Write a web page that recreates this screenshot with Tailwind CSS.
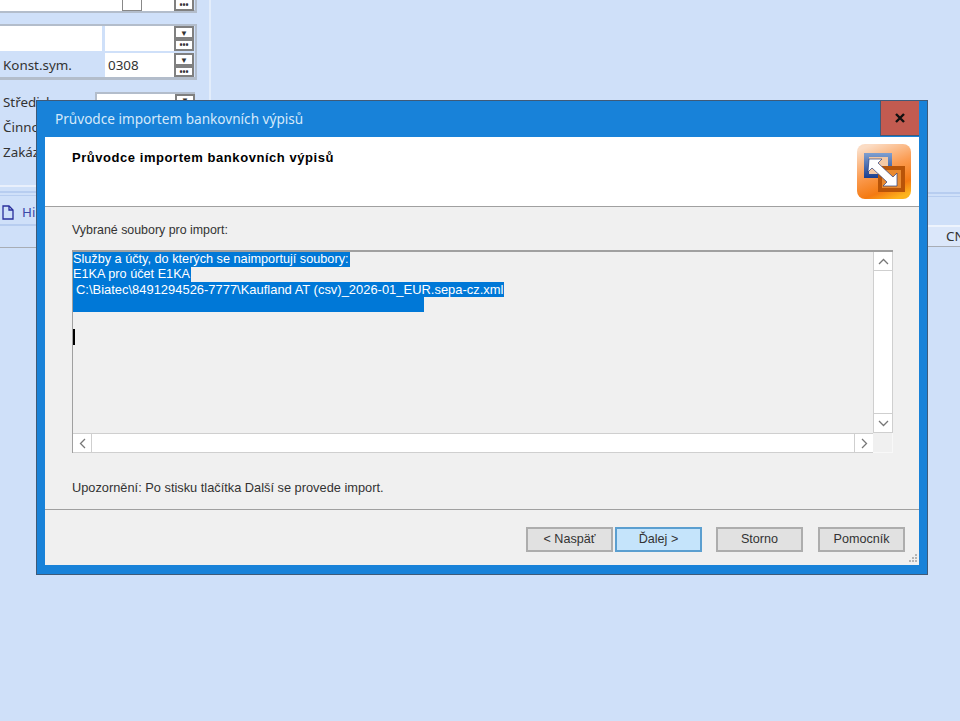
<!DOCTYPE html>
<html lang="cs">
<head>
    <meta charset="UTF-8">
    <title>Průvodce importem bankovních výpisů</title>
    <script src="https://cdn.jsdelivr.net/npm/@tailwindcss/browser@4"></script>
</head>
<body class="relative h-[721px] w-[960px] overflow-hidden bg-[#cfe0f9] font-['Liberation_Sans',sans-serif] text-[12px] text-[#222]">

    <!-- form behind the dialog -->
    <div class="flex h-[248px] w-[211px] flex-col border-r-2 border-[#e3edfb] font-['Noto_Sans',sans-serif] text-[13.4px] text-[#333]">
        <div class="flex h-[13px] w-[197px] border-r-[2px] border-b-[3px] border-[#b3bdcb] pr-[1px]">
            <div class="h-[11px] w-[122px] bg-white"></div>
            <div class="h-[11px] w-[20px] border border-t-0 border-[#888] bg-white"></div>
            <div class="h-[11px] w-[32px] bg-white"></div>
            <div class="flex h-[11px] w-[20px] items-center justify-center border-2 border-t-0 border-[#808080] bg-white text-[8px] leading-none font-bold">•••</div>
        </div>
        <div class="mt-[11px] h-[56px] w-[197px] border-t-[2px] border-r-[2px] border-b-[3px] border-[#b3bdcb]">
            <div class="flex h-[25px]">
                <div class="w-[102px] bg-white"></div>
                <div class="ml-[3px] w-[69px] bg-white"></div>
                <div class="flex w-[20px] flex-col">
                    <div class="flex h-[13px] items-center justify-center border-2 border-[#808080] bg-white text-[8px] leading-none">▼</div>
                    <div class="flex h-[12px] items-center justify-center border-2 border-[#808080] bg-white text-[8px] leading-none font-bold">•••</div>
                </div>
            </div>
            <div class="mt-[2px] flex h-[24px] items-center">
                <div class="w-[105px] pt-[1px] pl-[3px]">Konst.sym.</div>
                <div class="flex h-[24px] w-[69px] items-center bg-white pl-[3px]">0308</div>
                <div class="flex w-[20px] flex-col">
                    <div class="flex h-[13px] items-center justify-center border-2 border-[#808080] bg-white text-[8px] leading-none">▼</div>
                    <div class="flex h-[11px] items-center justify-center border-2 border-[#808080] bg-white text-[8px] leading-none font-bold">•••</div>
                </div>
            </div>
        </div>
        <div class="relative mt-[12px] flex h-[94px] w-[197px] flex-col gap-[6px] pt-[1px] pl-[3px]">
            <div class="absolute top-0 left-[95px] flex h-[12px] w-[100px] justify-end border-2 border-r-0 border-b-0 border-[#b3bdcb] bg-white">
                <div class="flex h-[10px] w-[20px] items-start justify-center border-2 border-b-0 border-[#808080] bg-white text-[8px] leading-none">▼</div>
            </div>
            <div class="leading-[19px]">Středisko</div>
            <div class="leading-[19px]">Činnost</div>
            <div class="leading-[19px]">Zakázka</div>
        </div>
        <div class="h-[2px] w-[210px] bg-[#e9f0fc]"></div>
        <div class="mt-[4px] h-[2px] w-[210px] bg-[#b7cdf0]"></div>
        <div class="mt-[2px] h-[1px] w-[210px] bg-[#b7cdf0]"></div>
        <div class="mt-[7px] flex h-[18px] items-center gap-[8px] pl-[2px] text-[#3c4aa8]">
            <svg width="12" height="15" viewBox="0 0 12 15" fill="none" stroke="#2a2f9c" stroke-width="1.3"><path d="M1 1h6l4 4v9H1z"/><path d="M7 1v4h4"/></svg>
            <span>Historie</span>
        </div>
        <div class="mt-[3px] h-[2px] w-[210px] bg-[#b7cdf0]"></div>
        <div class="mt-[21px] h-px w-[210px] bg-[#a8adb5]"></div>
    </div>

    <!-- right side strip of the same form -->
    <div class="absolute top-[192px] left-[928px] w-[32px] overflow-hidden font-['Noto_Sans',sans-serif] text-[13.4px] text-[#333]">
        <div class="h-[2px] bg-[#b7cdf0]"></div>
        <div class="mt-[2px] h-px bg-[#b7cdf0]"></div>
        <div class="mt-[28px] h-[2px] bg-[#eef4fd]"></div>
        <div class="flex h-[20px] items-center border-b border-[#a8adb5] bg-[#dbe7fa] pl-[18px]">CN</div>
    </div>

    <!-- dialog window -->
    <div class="absolute top-[100px] left-[36px] flex h-[475px] w-[892px] flex-col border border-[#3f5a78] bg-[#1882d9]">
        <div class="flex h-[36px] shrink-0 items-start">
            <div class="flex-1 pt-[8px] pl-[18px] font-['Noto_Sans',sans-serif] text-[13.6px] leading-[20px] text-[#d5e9fa]">Průvodce importem bankovních výpisů</div>
            <div class="mr-[8px] flex h-[35px] w-[39px] items-center justify-center border-b border-l border-[#3f5a78] bg-[#c25b50]">
                <svg width="12" height="10" viewBox="0 0 12 10" stroke="#111" stroke-width="2.4"><path d="M2 1l8 8M10 1l-8 8"/></svg>
            </div>
        </div>

        <div class="mx-[8px] mb-[9px] flex min-h-0 flex-1 flex-col bg-[#f0f0f0]">
            <div class="flex h-[70px] shrink-0 items-start justify-between border-b border-[#a0a0a0] bg-white pr-[8px]">
                <div class="pt-[13px] pl-[27px] text-[13px] leading-[15px] font-bold tracking-[0.55px] text-black">Průvodce importem bankovních výpisů</div>
                <svg class="mt-[7px]" width="54" height="55" viewBox="0 0 54 55">
                    <defs>
                        <linearGradient id="bg" x1="0.3" y1="0" x2="0.7" y2="1">
                            <stop offset="0" stop-color="#fbdcc4"/>
                            <stop offset="0.45" stop-color="#fb9c52"/>
                            <stop offset="0.8" stop-color="#f47a12"/>
                            <stop offset="1" stop-color="#fdb41c"/>
                        </linearGradient>
                        <linearGradient id="blue" x1="0" y1="0" x2="0" y2="1">
                            <stop offset="0" stop-color="#7f9fd0"/>
                            <stop offset="1" stop-color="#1c3f8f"/>
                        </linearGradient>
                    </defs>
                    <rect width="54" height="55" rx="8" fill="url(#bg)"/>
                    <rect x="7" y="9" width="28" height="25" fill="url(#blue)"/>
                    <rect x="12" y="13" width="19" height="17" fill="#f4c8a4"/>
                    <rect x="21" y="22" width="27" height="26" fill="#b85408"/>
                    <rect x="25" y="26" width="19" height="18" fill="#e88a30"/>
                    <path d="M12 15h13l-4 4 15 14 4-4v13H26l4-4-15-14-4 4z" fill="#fff" stroke="#2a3f80" stroke-width="0.7"/>
                </svg>
            </div>

            <div class="flex min-h-0 flex-1 flex-col px-[27px]">
                <div class="mt-[16px] text-[12.4px] leading-[15px] text-[#333]">Vybrané soubory pro import:</div>
                <!-- read-only text box with scrollbars -->
                <div class="mt-[12px] flex h-[203px] w-[821px] flex-col border-t-2 border-l border-[#a0a0a0]">
                    <div class="flex min-h-0 flex-1">
                        <div class="flex-1 text-[12.7px] leading-[15px] text-white">
                            <div class="w-fit bg-[#0078d7] pr-[1px]">Služby a účty, do kterých se naimportují soubory:</div>
                            <div class="w-fit bg-[#0078d7] pr-[1px]">E1KA pro účet E1KA</div>
                            <div class="w-fit bg-[#0078d7] pr-[1px] pl-[3px] text-[12.95px]">C:\Biatec\8491294526-7777\Kaufland AT (csv)_2026-01_EUR.sepa-cz.xml</div>
                            <div class="h-[15px] w-[351px] bg-[#0078d7]"></div>
                            <div class="mt-[17px] h-[16px] w-[2px] bg-black"></div>
                        </div>
                        <div class="flex w-[20px] flex-col border border-t-0 border-[#cfcfcf] bg-white">
                            <div class="flex h-[19px] items-center justify-center border-b border-[#cfcfcf]">
                                <svg width="11" height="7" viewBox="0 0 11 7" fill="none" stroke="#777" stroke-width="1.3"><path d="M1 6l4.500-4.500L10 6"/></svg>
                            </div>
                            <div class="flex-1"></div>
                            <div class="flex h-[19px] items-center justify-center border-t border-[#cfcfcf]">
                                <svg width="11" height="7" viewBox="0 0 11 7" fill="none" stroke="#777" stroke-width="1.3"><path d="M1 1l4.500 4.500L10 1"/></svg>
                            </div>
                        </div>
                    </div>
                    <div class="flex h-[20px] shrink-0">
                        <div class="flex flex-1 border-y border-[#cfcfcf] bg-white">
                            <div class="flex w-[19px] items-center justify-center border-r border-[#cfcfcf]">
                                <svg width="7" height="11" viewBox="0 0 7 11" fill="none" stroke="#777" stroke-width="1.3"><path d="M6 1L1.500 5.500 6 10"/></svg>
                            </div>
                            <div class="flex-1"></div>
                            <div class="flex w-[19px] items-center justify-center border-l border-[#cfcfcf]">
                                <svg width="7" height="11" viewBox="0 0 7 11" fill="none" stroke="#777" stroke-width="1.3"><path d="M1 1l4.500 4.500L1 10"/></svg>
                            </div>
                        </div>
                        <div class="w-[20px] border-r border-b border-[#f8f8f8]"></div>
                    </div>
                </div>
                <div class="mt-[27px] text-[12.8px] leading-[15px] text-[#333]">Upozornění: Po stisku tlačítka Další se provede import.</div>
            </div>

            <div class="relative flex h-[56px] shrink-0 items-start border-t border-[#a0a0a0] pt-[17px] pl-[481px] text-[12.6px] text-[#333]">
                <button class="h-[25px] w-[87px] border-2 border-[#adadad] bg-[#e1e1e1]">&lt; Naspäť</button>
                <button class="ml-[2px] h-[25px] w-[87px] border-2 border-[#5b9fd0] bg-[#c5e4fb]">Ďalej &gt;</button>
                <button class="ml-[14px] h-[25px] w-[87px] border-2 border-[#adadad] bg-[#e1e1e1]">Storno</button>
                <button class="ml-[15px] h-[25px] w-[87px] border-2 border-[#adadad] bg-[#e1e1e1]">Pomocník</button>
                <svg class="absolute right-[1px] bottom-[1px]" width="11" height="11" viewBox="0 0 11 11" fill="#b5b5b5"><rect x="8" y="1" width="2" height="2"/><rect x="5" y="4" width="2" height="2"/><rect x="8" y="4" width="2" height="2"/><rect x="2" y="7" width="2" height="2"/><rect x="5" y="7" width="2" height="2"/><rect x="8" y="7" width="2" height="2"/></svg>
            </div>
        </div>
    </div>
</body>
</html>
